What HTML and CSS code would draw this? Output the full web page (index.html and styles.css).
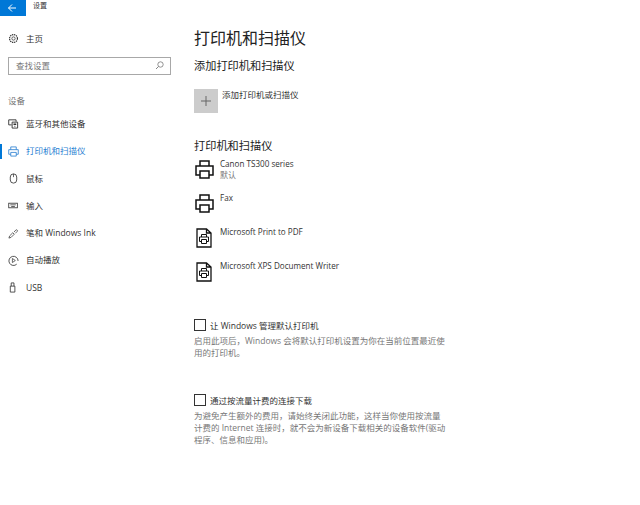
FILE: index.html
```html
<!DOCTYPE html>
<html lang="zh-CN">
<head>
<meta charset="utf-8">
<title>设置</title>
<link rel="stylesheet" href="styles.css">
</head>
<body>
<svg class="defs" width="0" height="0">
  <defs>
    <symbol id="printer" viewBox="0 0 19 19">
      <path d="M5 6V1h9v5M5 15H1V6h17v9h-4M5 11h9v7H5z" fill="none" stroke="currentColor" stroke-width="1.500"/>
    </symbol>
    <symbol id="docprinter" viewBox="0 0 16 20">
      <path d="M1 1h9.500L15 5v14H1zM10.500 1v4H15" fill="none" stroke="currentColor" stroke-width="1.300"/>
      <path d="M5.500 9V6.500h5V9M5.500 13.500H3.500V9h9v4.500h-2M5.500 11.500h5v4h-5z" fill="none" stroke="currentColor" stroke-width="1"/>
    </symbol>
  </defs>
</svg>
<header class="titlebar">
  <div class="back">
    <svg width="10" height="10" viewBox="0 0 10 10"><path d="M9 5H1.500M5 1.500 1.500 5 5 8.500" fill="none" stroke="#fff" stroke-width="1"/></svg>
  </div>
  <span class="apptitle">设置</span>
</header>
<div class="app">
  <aside class="sidebar">
    <div class="navrow home">
      <svg class="navicon" viewBox="0 0 12 12"><circle cx="6" cy="6" r="1.800" fill="none" stroke="currentColor" stroke-width=".8"/><circle cx="6" cy="6" r="4.300" fill="none" stroke="currentColor" stroke-width="1.300" stroke-dasharray="1.500 .75"/></svg>
      <span>主页</span>
    </div>
    <div class="search">
      <span>查找设置</span>
      <svg width="9" height="9" viewBox="0 0 9 9"><circle cx="5.500" cy="3.500" r="2.700" fill="none" stroke="#777" stroke-width=".8"/><path d="M3.500 5.500 1 8" stroke="#777" stroke-width=".9"/></svg>
    </div>
    <div class="grouplabel">设备</div>
    <nav class="nav">
      <div class="navrow">
        <svg class="navicon" viewBox="0 0 12 12"><path d="M4 7.500H.8V2h8v2" fill="none" stroke="currentColor" stroke-width="1"/><path d="M4.500 4.500h6v6.500h-6z" fill="none" stroke="currentColor" stroke-width="1"/><path d="M6 6h3v1.500H6zM7 8.500h1v1H7z" fill="currentColor"/></svg>
        <span>蓝牙和其他设备</span>
      </div>
      <div class="navrow active">
        <svg class="navicon" viewBox="0 0 12 12"><path d="M3 4V1h6v3M3 9H.8V4h10.400v5H9M3 7h6v4H3z" fill="none" stroke="currentColor" stroke-width=".9"/></svg>
        <span>打印机和扫描仪</span>
      </div>
      <div class="navrow">
        <svg class="navicon" viewBox="0 0 12 12"><rect x="2.500" y="1" width="7" height="10" rx="3.400" fill="none" stroke="currentColor" stroke-width=".9"/><path d="M6 1v3.500" stroke="currentColor" stroke-width=".8"/></svg>
        <span>鼠标</span>
      </div>
      <div class="navrow">
        <svg class="navicon" viewBox="0 0 12 12"><rect x=".8" y="3.500" width="9.400" height="5" fill="none" stroke="currentColor" stroke-width=".9"/><path d="M2.500 5h6v.8h-6zM3.500 6.600h4v.7h-4z" fill="currentColor"/></svg>
        <span>输入</span>
      </div>
      <div class="navrow">
        <svg class="navicon" viewBox="0 0 12 12"><path d="M1 11l.8-2.400 3.400-3.400 1.600 1.600-3.400 3.400zM6.500 4.500l2-2.200a1 1 0 0 1 1.500 1.500L8 5.800" fill="none" stroke="currentColor" stroke-width=".8"/></svg>
        <span>笔和 Windows Ink</span>
      </div>
      <div class="navrow">
        <svg class="navicon" viewBox="0 0 12 12"><path d="M9.500 10A5 5 0 1 1 11 6.500" fill="none" stroke="currentColor" stroke-width=".9"/><path d="M4.800 3.800 8 6 4.800 8.200z" fill="none" stroke="currentColor" stroke-width=".8"/></svg>
        <span>自动播放</span>
      </div>
      <div class="navrow">
        <svg class="navicon" viewBox="0 0 12 12"><path d="M2.500 4.500h5V11h-5zM3.500 4.500V1h3v3.500" fill="none" stroke="currentColor" stroke-width=".9"/></svg>
        <span>USB</span>
      </div>
    </nav>
  </aside>
  <main class="main">
    <h1 class="pagetitle">打印机和扫描仪</h1>
    <h2 class="subtitle">添加打印机和扫描仪</h2>
    <div class="addrow">
      <div class="addbtn">
        <svg width="10" height="10" viewBox="0 0 10 10"><path d="M5 0v10M0 5h10" stroke="#666" stroke-width="1"/></svg>
      </div>
      <span class="addlabel">添加打印机或扫描仪</span>
    </div>
    <h2 class="subtitle section">打印机和扫描仪</h2>
    <div class="printers">
      <div class="printer">
        <div class="picon"><svg width="19" height="19"><use href="#printer"/></svg></div>
        <div class="pinfo"><div>Canon TS300 series</div><div class="pstate">默认</div></div>
      </div>
      <div class="printer">
        <div class="picon"><svg width="19" height="19"><use href="#printer"/></svg></div>
        <div class="pinfo"><div>Fax</div></div>
      </div>
      <div class="printer">
        <div class="picon"><svg width="16" height="20"><use href="#docprinter"/></svg></div>
        <div class="pinfo"><div>Microsoft Print to PDF</div></div>
      </div>
      <div class="printer">
        <div class="picon"><svg width="16" height="20"><use href="#docprinter"/></svg></div>
        <div class="pinfo"><div>Microsoft XPS Document Writer</div></div>
      </div>
    </div>
    <section class="option first">
      <label class="check"><span class="box"></span><span>让 Windows 管理默认打印机</span></label>
      <p class="desc">启用此项后，Windows 会将默认打印机设置为你在当前位置最近使<br>用的打印机。</p>
    </section>
    <section class="option second">
      <label class="check"><span class="box"></span><span>通过按流量计费的连接下载</span></label>
      <p class="desc">为避免产生额外的费用，请始终关闭此功能，这样当你使用按流量<br>计费的 Internet 连接时，就不会为新设备下载相关的设备软件(驱动<br>程序、信息和应用)。</p>
    </section>
  </main>
</div>
</body>
</html>
```
FILE: styles.css
```css
* { box-sizing: border-box; }
html, body { margin: 0; padding: 0; background: #fff; }
body {
  width: 640px;
  height: 505px;
  overflow: hidden;
  color: #333;
  font-family: "Open Sans", "Noto Sans CJK SC", sans-serif;
  font-size: 8.5px;
}
.defs { position: absolute; }
.titlebar { display: flex; align-items: center; height: 16px; }
.back {
  display: flex;
  align-items: center;
  justify-content: center;
  width: 26px;
  height: 16px;
  background: #0078d7;
  padding-right: 2px;
}
.apptitle { margin-left: 7px; font-size: 7px; line-height: 12px; margin-top: -4px; }
.app { display: flex; }
.sidebar { width: 194px; flex: none; }
.navrow {
  display: flex;
  align-items: center;
  gap: 7px;
  height: 27.300px;
  padding-left: 8px;
  line-height: 12px;
}
.navicon { width: 11px; height: 11px; flex: none; color: #333; }
.home { margin-top: 9px; }
.search {
  display: flex;
  align-items: center;
  justify-content: space-between;
  width: 163px;
  height: 18px;
  margin: 5px 0 0 8px;
  padding: 0 6px 2px 7px;
  border: 1px solid #a8a8a8;
  color: #777;
}
.grouplabel { margin: 20px 0 0 8px; height: 12px; line-height: 12px; color: #777; }
.nav { margin-top: 3px; }
.active { position: relative; color: #2a80d2; }
.active .navicon { color: #2a80d2; }
.active::before {
  content: "";
  position: absolute;
  left: 0;
  top: 6px;
  width: 2px;
  height: 15px;
  background: #0078d7;
}
.main { flex: 1; min-width: 0; }
.pagetitle {
  margin: 10px 0 0;
  font-size: 16px;
  font-weight: 400;
  line-height: 24px;
  color: #222;
}
.subtitle {
  margin: 8px 0 0;
  font-size: 11.200px;
  font-weight: 400;
  line-height: 16px;
  color: #222;
}
.addrow { display: flex; align-items: flex-start; gap: 4px; margin-top: 15px; }
.addbtn {
  display: flex;
  align-items: center;
  justify-content: center;
  width: 24px;
  height: 24px;
  background: #ccc;
}
.addlabel { line-height: 14px; margin-top: -1px; }
.section { margin-top: 25px; }
.printers { margin-top: 6px; }
.printer { display: flex; height: 34px; font-size: 8.100px; }
.picon { width: 26px; flex: none; display: flex; justify-content: center; align-items: flex-start; padding-right: 6px; color: #111; }
.pinfo { line-height: 12px; margin-top: -2px; }
.pstate { color: #777; font-size: 8px; line-height: 10px; }
.option { width: 330px; }
.first { margin-top: 22px; }
.second { margin-top: 34px; }
.check { display: flex; align-items: center; gap: 4px; height: 13px; color: #333; }
.box { width: 12px; height: 12px; border: 1.500px solid #333; flex: none; }
.desc { margin: 4px 0 0; line-height: 12px; color: #777; }
```
